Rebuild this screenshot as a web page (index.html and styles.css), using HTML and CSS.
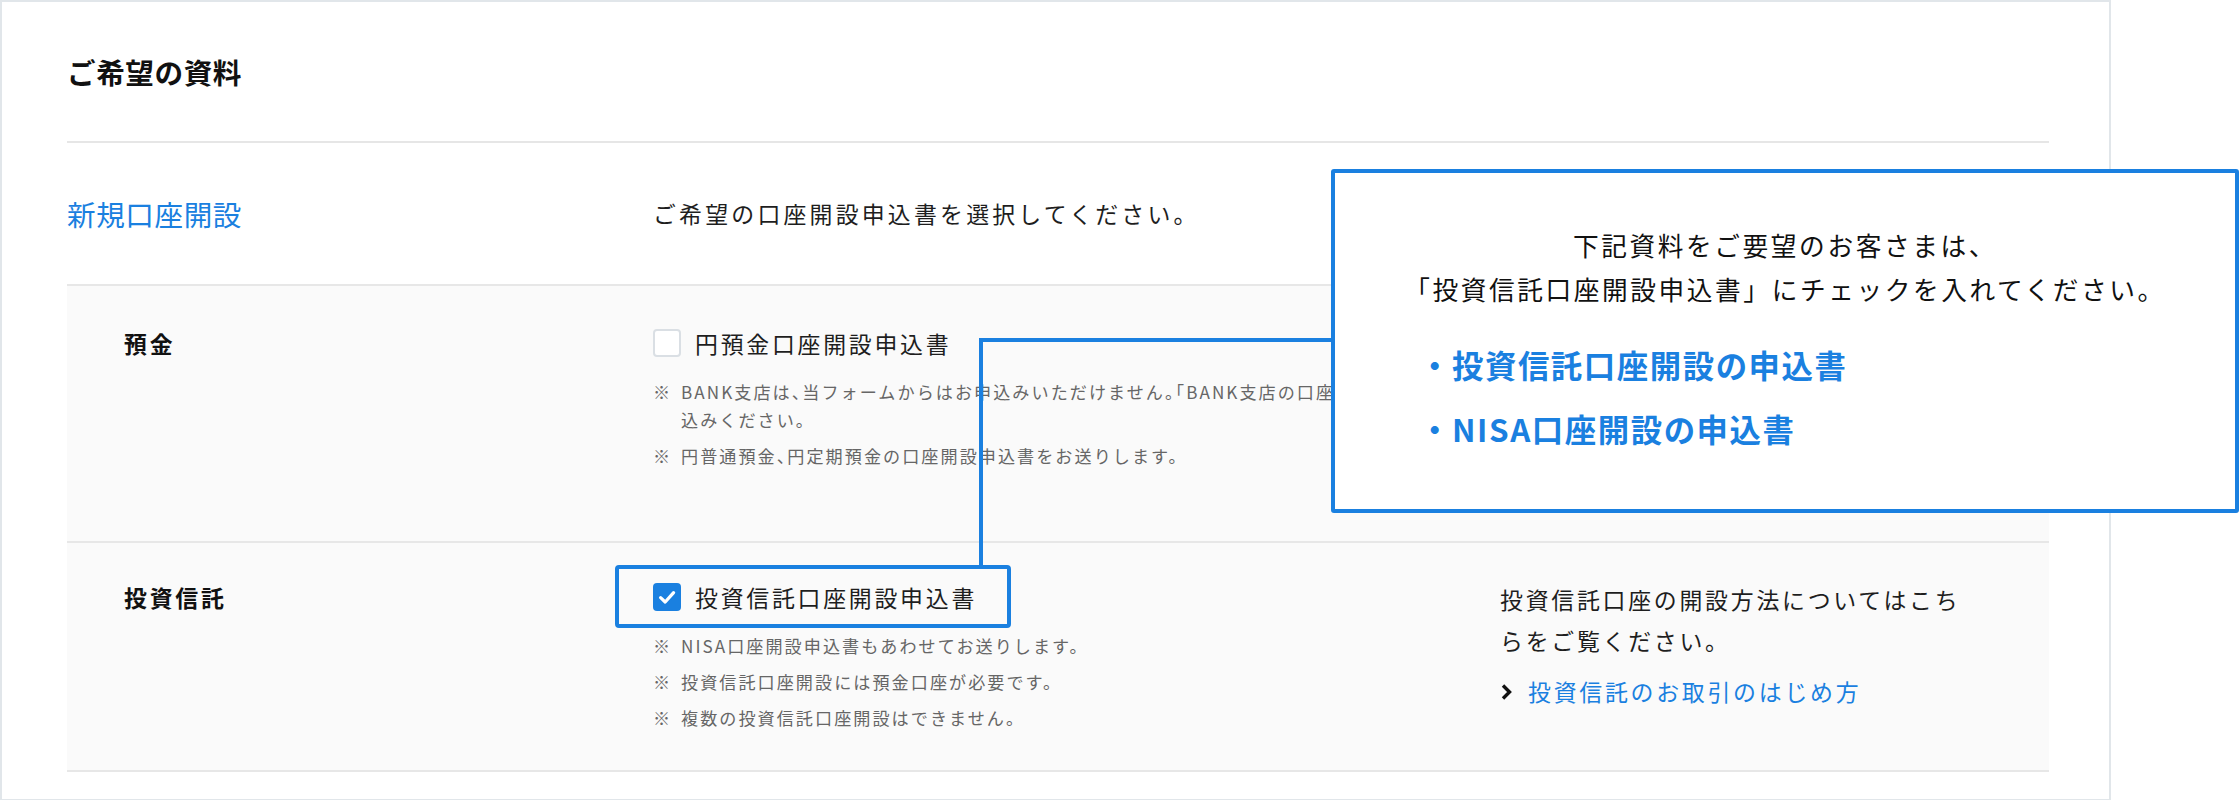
FILE: index.html
```html
<!DOCTYPE html>
<html lang="ja">
<head>
<meta charset="utf-8">
<title>ご希望の資料</title>
<link rel="stylesheet" href="styles.css">
</head>
<body>
<section class="card">
  <h2 class="card-title">ご希望の資料</h2>

  <div class="row row-head">
    <div class="head-label">新規口座開設</div>
    <div class="head-text">ご希望の口座開設申込書を選択してください。</div>
    <div></div>
  </div>

  <div class="group">
    <div class="row row-item row-deposit">
      <div class="item-label">預金</div>
      <div class="item-main">
        <label class="check">
          <span class="box"></span>
          <span class="check-text">円預金口座開設申込書</span>
        </label>
        <ul class="notes">
          <li><span class="mark">※</span><span><span class="nowrap">BANK支店は、当フォームからはお申込みいただけません。「BANK支店の口座開設申込書」でお申</span><br>込みください。</span></li>
          <li><span class="mark">※</span><span>円普通預金、円定期預金の口座開設申込書をお送りします。</span></li>
        </ul>
      </div>
      <div class="item-side"></div>
    </div>

    <div class="row row-item row-fund">
      <div class="item-label">投資信託</div>
      <div class="item-main">
        <label class="check is-highlight">
          <span class="box is-checked">
            <svg viewBox="0 0 28 28" width="28" height="28" aria-hidden="true"><path d="M7.6 14.6 L12.2 19 L20.6 9.6" fill="none" stroke="#fff" stroke-width="3.2" stroke-linecap="round" stroke-linejoin="round"/></svg>
          </span>
          <span class="check-text">投資信託口座開設申込書</span>
        </label>
        <ul class="notes">
          <li><span class="mark">※</span><span>NISA口座開設申込書もあわせてお送りします。</span></li>
          <li><span class="mark">※</span><span>投資信託口座開設には預金口座が必要です。</span></li>
          <li><span class="mark">※</span><span>複数の投資信託口座開設はできません。</span></li>
        </ul>
      </div>
      <div class="item-side">
        <p class="side-text">投資信託口座の開設方法についてはこちらをご覧ください。</p>
        <a class="more-link" href="#">
          <svg class="chevron" viewBox="0 0 13 22" width="13" height="22" aria-hidden="true"><path d="M3 4.5 L9.5 11 L3 17.5" fill="none" stroke="#111" stroke-width="3.4" stroke-linejoin="miter"/></svg>
          <span>投資信託のお取引のはじめ方</span>
        </a>
      </div>
    </div>
  </div>

  <div class="connector"></div>
  <aside class="callout">
    <p class="callout-lead">下記資料をご要望のお客さまは、<br>「投資信託口座開設申込書」にチェックを入れてください。</p>
    <ul class="callout-list">
      <li>・投資信託口座開設の申込書</li>
      <li>・NISA口座開設の申込書</li>
    </ul>
  </aside>
</section>
</body>
</html>
```

FILE: styles.css
```css
* {
  box-sizing: border-box;
}

body {
  margin: 0;
  background: #ffffff;
  font-family: "Noto Sans CJK JP", "Noto Sans", sans-serif;
  color: #1e1e1e;
}

.card {
  position: relative;
  width: 2111px;
  border: 2px solid #e1e6ea;
  background: #ffffff;
  padding: 48px 60px 27px 65px;
}

.card-title {
  margin: 0;
  padding-bottom: 48px;
  border-bottom: 2px solid #e6e6e6;
  font-size: 28.6px;
  line-height: 43px;
  font-weight: 700;
  letter-spacing: 0.02em;
  color: #111;
}

.row {
  display: grid;
  grid-template-columns: 586px 847px 1fr;
  border-bottom: 2px solid #e7e7e7;
}

.row-head {
  padding: 49px 0;
  align-items: center;
}

.head-label {
  font-size: 28.6px;
  line-height: 43px;
  letter-spacing: 0.02em;
  color: #1a80e0;
}

.head-text {
  font-size: 22.9px;
  line-height: 43px;
  letter-spacing: 0.14em;
}

.group {
  background: #fafafa;
}

.row-item {
  align-items: start;
}

.row-deposit {
  padding: 36px 0 71px;
}

.row-fund {
  padding: 33px 0 38px;
}

.item-label {
  padding-left: 57px;
  font-size: 22.9px;
  line-height: 42px;
  font-weight: 700;
  letter-spacing: 0.12em;
  color: #111;
}

.check {
  position: relative;
  display: inline-flex;
  align-items: center;
  gap: 14px;
  font-size: 22.9px;
  line-height: 42px;
  letter-spacing: 0.12em;
  vertical-align: top;
}

.check.is-highlight::before {
  content: "";
  position: absolute;
  top: -11px;
  bottom: -10px;
  left: -38px;
  right: -34px;
  border: 4px solid #1a80e0;
  border-radius: 4px;
}

.box {
  display: block;
  flex: none;
  width: 28px;
  height: 28px;
  border: 2px solid #dadfe4;
  border-radius: 4px;
  background: #ffffff;
}

.box.is-checked {
  border: none;
  background: #1a80e0;
}

.box svg {
  display: block;
}

.notes {
  list-style: none;
  margin: 14px 0 0;
  padding: 0;
  font-size: 17.1px;
  line-height: 28px;
  letter-spacing: 0.12em;
  font-feature-settings: "halt";
  color: #666;
}

.notes li {
  display: flex;
}

.notes li + li {
  margin-top: 8px;
}

.mark {
  flex: none;
  width: 28px;
  font-feature-settings: normal;
}

.nowrap {
  white-space: nowrap;
}

.item-side {
  padding-top: 3px;
}

.side-text {
  margin: 0;
  width: 475px;
  font-size: 22.9px;
  line-height: 41px;
  letter-spacing: 0.12em;
}

.more-link {
  display: flex;
  align-items: center;
  gap: 15px;
  margin-top: 10px;
  font-size: 22.9px;
  line-height: 41px;
  letter-spacing: 0.12em;
  color: #1a80e0;
  text-decoration: none;
}

.chevron {
  flex: none;
  display: block;
}

.connector {
  position: absolute;
  left: 977px;
  top: 336px;
  width: 354px;
  height: 228px;
  border-top: 4px solid #1a80e0;
  border-left: 4px solid #1a80e0;
}

.callout {
  position: absolute;
  left: 1329px;
  top: 167px;
  width: 908px;
  height: 344px;
  border: 4px solid #1a80e0;
  border-radius: 3px;
  background: #ffffff;
  padding-top: 50px;
}

.callout-lead {
  margin: 0;
  text-align: center;
  font-size: 25.7px;
  line-height: 44px;
  letter-spacing: 0.1em;
  color: #111;
}

.callout-list {
  list-style: none;
  margin: 30px 0 0;
  padding: 0 0 0 84px;
  font-size: 31.4px;
  line-height: 48px;
  font-weight: 700;
  letter-spacing: 0.05em;
  color: #1a80e0;
}

.callout-list li + li {
  margin-top: 16px;
}
```
